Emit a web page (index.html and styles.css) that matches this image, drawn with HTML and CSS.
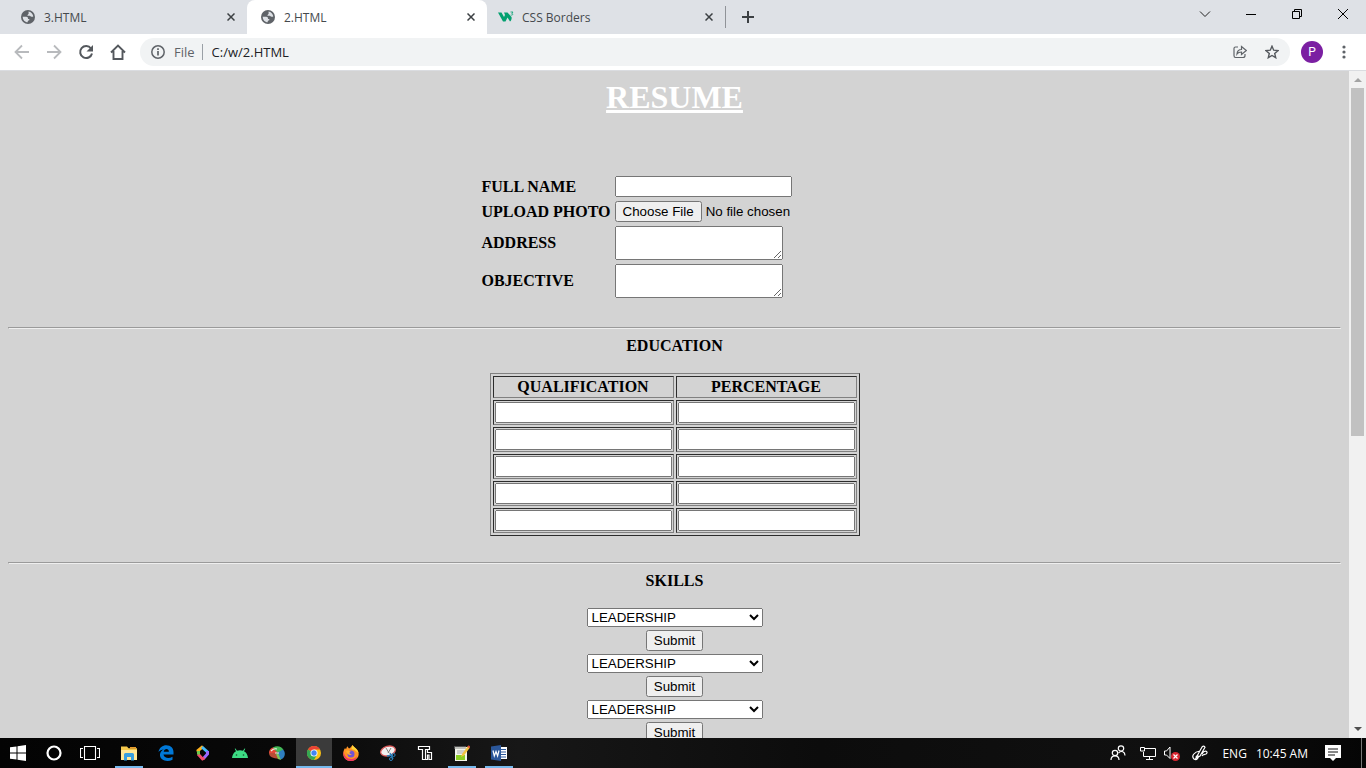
FILE: index.html
```html
<!DOCTYPE html>
<html lang="en">
<head>
<meta charset="utf-8">
<title>2.HTML</title>
<link rel="stylesheet" href="styles.css">
</head>
<body>
<svg class="defs" aria-hidden="true">
  <symbol id="globe" viewBox="0 0 14 14"><circle cx="7" cy="7" r="7" fill="#5f6368"/><path d="M7.5 1.6C10 2 12 4 12.3 6.500c-1.500.7-2.500 0-3.300-.8H6.500C6 5 7.600 4.500 7.700 3.600zM1.700 6.800h3.600c1.200 0 1.800.9 1.700 2.100h1.300v1.400c-1.500.3-1.600.9-1.600 2C3.800 12.300 1.700 9.800 1.700 6.800z" fill="#dee1e6"/></symbol>
  <symbol id="close" viewBox="0 0 8 8"><path d="M.5.5l7 7M7.500.5l-7 7" stroke="#3c4043" stroke-width="1.500" fill="none"/></symbol>
</svg>
<div class="desktop">
  <header class="tabs">
    <div class="tab"><svg class="i14"><use href="#globe"/></svg><span class="tab-title">3.HTML</span><button class="plain" aria-label="Close 3.HTML"><svg class="i8"><use href="#close"/></svg></button></div>
    <div class="tab active"><svg class="i14"><use href="#globe"/></svg><span class="tab-title">2.HTML</span><button class="plain" aria-label="Close 2.HTML"><svg class="i8"><use href="#close"/></svg></button></div>
    <div class="tab last"><svg class="w3" viewBox="0 0 16 12"><path d="M0 1.500h3.500L6 6l1-2-1-2.500h3.500l4 4.500c.5 1.500-.2 4-1.500 4.500L9.500 6.500 7.500 10.500H5z" fill="#04a070"/><path d="M12.500 1h2.500l-1.200 1.500c1.700.2 1.200 2-1.100 1.500" fill="none" stroke="#04a070" stroke-width=".8"/></svg><span class="tab-title">CSS Borders</span><button class="plain" aria-label="Close CSS Borders"><svg class="i8"><use href="#close"/></svg></button></div>
    <button class="plain new-tab" aria-label="New tab"><svg class="i12" viewBox="0 0 12 12"><path d="M6 0v12M0 6h12" stroke="#3c4043" stroke-width="2"/></svg></button>
    <div class="window-controls">
      <button class="plain" aria-label="Search tabs"><svg class="i12" viewBox="0 0 12 12"><path d="M1 3.500l5 5 5-5" fill="none" stroke="#222"/></svg></button>
      <button class="plain" aria-label="Minimize"><svg class="i12" viewBox="0 0 12 12"><path d="M1 6.500h10" stroke="#000"/></svg></button>
      <button class="plain" aria-label="Restore"><svg class="i12" viewBox="0 0 12 12"><path d="M1.500 3.500h7v7h-7zM3.500 3.500v-2h7v7h-2" fill="none" stroke="#000"/></svg></button>
      <button class="plain" aria-label="Close window"><svg class="i12" viewBox="0 0 12 12"><path d="M1 1l10 10M11 1L1 11" stroke="#000"/></svg></button>
    </div>
  </header>
  <nav class="toolbar">
    <button class="plain" aria-label="Back"><svg class="i16" viewBox="0 0 16 16"><path d="M15 8H2M8 1.500L1.500 8 8 14.500" fill="none" stroke="#b8babd" stroke-width="1.800"/></svg></button>
    <button class="plain" aria-label="Forward"><svg class="i16" viewBox="0 0 16 16"><path d="M1 8h13M8 1.500L14.500 8 8 14.500" fill="none" stroke="#b8babd" stroke-width="1.800"/></svg></button>
    <button class="plain" aria-label="Reload"><svg class="i16" viewBox="0 0 16 16"><path d="M13 4.500A6 6 0 1 0 14 9.500" fill="none" stroke="#54585d" stroke-width="2"/><path d="M15 1v6.500H8.500z" fill="#54585d"/></svg></button>
    <button class="plain" aria-label="Home"><svg class="i16" viewBox="0 0 16 16"><path d="M1 8.500L8 1.500l7 7M3.500 7v8h9V7" fill="none" stroke="#54585d" stroke-width="1.900"/></svg></button>
    <div class="address">
      <svg class="i14" viewBox="0 0 14 14"><circle cx="7" cy="7" r="6.200" fill="none" stroke="#5f6368" stroke-width="1.500"/><path d="M7 6v4.500M7 3.300V5" stroke="#5f6368" stroke-width="1.700"/></svg>
      <span class="scheme">File</span>
      <input class="url" aria-label="Address" value="C:/w/2.HTML">
      <button class="plain" aria-label="Share"><svg class="i14" viewBox="0 0 14 14"><path d="M5 2H2.500Q1 2 1 3.500v7Q1 12.500 2.500 12.500h7.500q2 0 2-2V9M4 9c.2-3 1.700-4.500 4.500-4.500V1.500l4.800 4-4.800 4V7C6.500 7 5 7.500 4 9z" fill="none" stroke="#5f6368" stroke-width="1.200"/></svg></button>
      <button class="plain" aria-label="Bookmark"><svg class="i14" viewBox="0 0 14 14"><path d="M7 1.200l1.700 4 4.300.4-3.300 2.900 1 4.200L7 10.500l-3.700 2.200 1-4.200L1 5.600l4.300-.4z" fill="none" stroke="#54585d" stroke-width="1.400"/></svg></button>
    </div>
    <button class="avatar" aria-label="Profile P">P</button>
    <button class="plain menu" aria-label="Menu"><svg class="i16" viewBox="0 0 16 16"><g fill="#5f6368"><circle cx="8" cy="3" r="1.600"/><circle cx="8" cy="8" r="1.600"/><circle cx="8" cy="13" r="1.600"/></g></svg></button>
  </nav>
  <div class="viewport">
    <main class="page">
      <h1>RESUME</h1>
      <table class="details">
        <tr><th><label for="name">FULL NAME</label></th><td><input id="name" class="field" type="text"></td></tr>
        <tr><th><label for="photo">UPLOAD PHOTO</label></th><td><input id="photo" class="file" type="file"></td></tr>
        <tr><th><label for="addr">ADDRESS</label></th><td><textarea id="addr"></textarea></td></tr>
        <tr><th><label for="obj">OBJECTIVE</label></th><td><textarea id="obj"></textarea></td></tr>
      </table>
      <hr>
      <h2>EDUCATION</h2>
      <table class="education">
        <tr><th>QUALIFICATION</th><th>PERCENTAGE</th></tr>
        <tr><td><input class="field" aria-label="Qualification 1"></td><td><input class="field" aria-label="Percentage 1"></td></tr>
        <tr><td><input class="field" aria-label="Qualification 2"></td><td><input class="field" aria-label="Percentage 2"></td></tr>
        <tr><td><input class="field" aria-label="Qualification 3"></td><td><input class="field" aria-label="Percentage 3"></td></tr>
        <tr><td><input class="field" aria-label="Qualification 4"></td><td><input class="field" aria-label="Percentage 4"></td></tr>
        <tr><td><input class="field" aria-label="Qualification 5"></td><td><input class="field" aria-label="Percentage 5"></td></tr>
      </table>
      <hr>
      <h2>SKILLS</h2>
      <form class="skills">
        <select aria-label="Skill 1"><option>LEADERSHIP</option></select>
        <button type="button">Submit</button>
        <select aria-label="Skill 2"><option>LEADERSHIP</option></select>
        <button type="button">Submit</button>
        <select aria-label="Skill 3"><option>LEADERSHIP</option></select>
        <button type="button">Submit</button>
      </form>
    </main>
    <div class="scrollbar" aria-hidden="true">
      <svg class="arrow" viewBox="0 0 17 17"><path d="M5 11l4-4 4 4z" fill="#a3a3a3"/></svg>
      <div class="track"><div class="thumb"></div></div>
      <svg class="arrow" viewBox="0 0 17 17"><path d="M5 6l4 4 4-4z" fill="#505050"/></svg>
    </div>
  </div>
  <footer class="taskbar">
    <div class="system">
      <button class="task" aria-label="Start"><svg class="i16" viewBox="0 0 16 16"><path d="M0 2.300l6.500-.9v6.100H0zM7.500 1.200L16 0v7.500H7.500zM0 8.500h6.500v6.100L0 13.700zM7.500 8.500H16V16l-8.500-1.200z" fill="#fff"/></svg></button>
      <button class="task" aria-label="Cortana"><svg class="i16" viewBox="0 0 16 16"><circle cx="8" cy="8" r="6.500" fill="none" stroke="#fff" stroke-width="2.200"/></svg></button>
      <button class="task" aria-label="Task view"><svg class="i20" viewBox="0 0 20 20"><path d="M4.500 3.500h11v13h-11zM3 5.500H.5v9H3M17 5.500h2.500v9H17" fill="none" stroke="#fff" stroke-width="1.100"/></svg></button>
    </div>
    <button class="task open" aria-label="File Explorer"><svg class="i16" viewBox="0 0 16 16"><path d="M0 1.500h6l1.500 1.800H16V15H0z" fill="#f5c84c"/><path d="M0 5h16v10H0z" fill="#ffe797"/><path d="M9 2h6v1.500H9z" fill="#e99b28"/><path d="M3 15.500V9.500Q3 8 4.500 8h7Q13 8 13 9.500v6h-3V12H6v3.500z" fill="#379fe0"/></svg></button>
    <button class="task" aria-label="Edge"><svg class="i16" viewBox="0 0 16 16"><path d="M.5 7C1.500 2.500 4.500.3 8.300.3c4.700 0 7.200 3 7.200 7V9.500H5.500c.3 3.500 5.500 4.400 9 2.200v3.100C8.500 17.700 1.500 15 2 9.500 2.200 7 3.600 5.500 5.800 4.500 3.500 4.700 1.700 5.600.5 7zM5.700 6.700h5.200c0-4-4.800-3.500-5.200 0z" fill="#0078d7"/></svg></button>
    <button class="task" aria-label="Diamond app"><svg class="i16" viewBox="0 0 16 16"><g fill="none" stroke-width="3"><path d="M3.500 7.500l-.5-2L8 1.500" stroke="#ffb21c"/><path d="M7 2l5.500 5" stroke="#43bafa"/><path d="M12.500 6v3l-4 4.500" stroke="#9a68ff"/><path d="M9.500 13L7.500 14 3 9" stroke="#f34c6b"/><path d="M3.500 6v3.500" stroke="#6cca4f"/></g></svg></button>
    <button class="task" aria-label="Android"><svg class="i16" viewBox="0 0 16 16"><path d="M0 13C.3 9.500 2 7.200 4 6.200L2.700 3.800l.8-.4L5 5.800c1.900-.8 4.100-.8 6 0l1.500-2.400.8.4L12 6.200c2.200 1.200 3.700 3.500 4 6.800z" fill="#3ddc84"/><g fill="#174d2e"><circle cx="4.500" cy="10" r=".8"/><circle cx="11.500" cy="10" r=".8"/></g></svg></button>
    <button class="task" aria-label="Color tool"><svg class="i16" viewBox="0 0 16 16"><path d="M0 8C0 4 3 2 7 2l2 5-3 3z" fill="#e34837"/><path d="M4 2.500C8 0 13 1.500 14.500 5L9 8 6 5z" fill="#43b957"/><path d="M14 4.500c3.500 3.500 1.500 9.500-2.500 10L8 8z" fill="#2f7fc0"/><path d="M0 8l7 0 3 6C4 13 0 12 0 8z" fill="#b84d37"/><path d="M9 8l3 7-3-1-2-5z" fill="#7ec85c"/><path d="M2 6q3-3 6-2M6 8h4" stroke="#eef3ea" stroke-width="1.200" fill="none"/></svg></button>
    <button class="task open current" aria-label="Chrome"><svg class="i14" viewBox="0 0 14 14"><circle cx="7" cy="7" r="7" fill="#fbc116"/><path d="M7 7L.9 3.500A7 7 0 0 1 13.100 3.500H7z" fill="#ea4335"/><path d="M.9 3.500A7 7 0 0 0 7 14l3-5.200L7 7z" fill="#34a853"/><circle cx="7" cy="7" r="3.500" fill="#fff"/><circle cx="7" cy="7" r="2.700" fill="#4285f4"/></svg></button>
    <button class="task" aria-label="Firefox"><svg class="i16" viewBox="0 0 16 16"><path d="M9.500 0c1 2 3 3 4.500 4.500 4 5 .5 11.500-6 11.500C1 16-2 9.500 2 3l1 1.200 1.200-3L6 3.500c1.500-.5 2-1.500 3.500-3.500z" fill="#ff9424"/><path d="M.7 6C1 15 11 16 14 11c-1 4-3 5-6 5C2 16-.5 11 .7 6z" fill="#f23863"/><path d="M9.500 0c1 2 5 3.500 6 8l-4-3-3-1z" fill="#ffd637"/><circle cx="8" cy="9" r="3.500" fill="#7453d6"/><path d="M3 6c2-1 4 0 5 1-3 0-1 3 1 2-1 2-5 1-6-3z" fill="#ffb02e"/></svg></button>
    <button class="task" aria-label="Snipping Tool"><svg class="i16" viewBox="0 0 16 16"><ellipse cx="8" cy="6" rx="7.500" ry="4.700" fill="#f2f1f1" stroke="#d95a5a" stroke-width="1.300" transform="rotate(-16 8 6)"/><path d="M6 3l3 5M11 3L8 8" stroke="#85817e"/><path d="M7 11l6-1M10 8l3 6" stroke="#2a81bd" stroke-width="1.400"/><circle cx="13.500" cy="10" r="1.600" fill="none" stroke="#2a81bd"/><circle cx="11" cy="14" r="1.500" fill="none" stroke="#2a81bd"/></svg></button>
    <button class="task" aria-label="Typing app"><svg class="i16" viewBox="0 0 16 16"><path d="M1.500 1.500h11v3h-4v10h-3v-10h-4zM8.500 4.500h2v3h4v7h-2.500v-4.500h-1.500v4.500h-2z" fill="#111" stroke="#fff" stroke-width="1.200"/></svg></button>
    <button class="task open" aria-label="Notepad"><svg class="i16" viewBox="0 0 16 16"><path d="M1 2h12v14H1z" fill="#f3f5ec"/><path d="M1 1v3M3 1v3M5 1v3M7 1v3M9 1v3M11 1v3" stroke="#8b8b8b"/><path d="M3 6h8M3 8h7" stroke="#aaa"/><path d="M2 10h9v5H2z" fill="#8ccf24"/><path d="M7 12l1-3 6-8 2 1.500-6 8z" fill="#f1c341"/><path d="M14 1l2 1.500" stroke="#d84b38" stroke-width="2"/></svg></button>
    <button class="task open" aria-label="Word"><svg class="i16" viewBox="0 0 16 16"><path d="M8 2h8v12H8z" fill="#fff"/><path d="M10 4.500h5M10 7h5M10 9.500h5M10 12h5" stroke="#2b579a"/><path d="M0 1.500L10 0v16L0 14.500z" fill="#2b579a"/><path d="M2 5.500L3.300 11 5 6.500 6.600 11 8 5.500" fill="none" stroke="#fff" stroke-width="1.200"/></svg></button>
    <div class="tray">
      <svg class="i16" viewBox="0 0 16 16"><g fill="none" stroke="#fff" stroke-width="1.200"><circle cx="11" cy="3.500" r="2.700"/><circle cx="5" cy="8" r="2.700"/><path d="M1 15c0-5.500 8-5.500 8 0M8.500 8c3-3 6.500-1 6.500 2.500"/></g></svg>
      <svg class="i16 screen" viewBox="0 0 16 16"><path d="M5 3.500h10.500v8H3.500V7M9.500 11.500v3M6 14.500h7M.5 2.500h4V6h-4z" fill="none" stroke="#fff"/></svg>
      <svg class="i16 sound" viewBox="0 0 16 16"><path d="M.5 6h2L6 2v11.500L2.500 10h-2z" fill="none" stroke="#fff"/><circle cx="11.500" cy="11.500" r="4.500" fill="#da2630"/><path d="M9.500 9.500l4 4M13.500 9.500l-4 4" stroke="#fff" stroke-width="1.200"/></svg>
      <svg class="i16 pen" viewBox="0 0 16 16"><path d="M4 13L10 2q2-2 3 .3L8 11zM10 9c3-5 7-2 4 0-2 1-3 0-4 2M8 6C2 7-1 11 2 14c3 2 5-2 4-3-1-.8-3 1-1 2" fill="none" stroke="#fff" stroke-width="1.200"/></svg>
      <span class="lang">ENG</span><span class="clock">10:45 AM</span>
      <svg class="i16" viewBox="0 0 16 16"><path d="M0 0h16v13h-5l-3 3-3-3H0z" fill="#fff"/><path d="M3 4h10M3 7h10M3 10h7" stroke="#111"/></svg>
    </div>
  </footer>
</div>
</body>
</html>
```
FILE: styles.css
```css
* { box-sizing: border-box; }
html, body { height: 100%; }
body { margin: 0; font-family: "Liberation Serif", serif; overflow: hidden; }
.defs { display: none; }
svg { display: block; flex: none; }
.i8 { width: 8px; height: 8px; }
.i12 { width: 12px; height: 12px; }
.i14 { width: 14px; height: 14px; }
.i16 { width: 16px; height: 16px; }
.i20 { width: 20px; height: 20px; }
.desktop { display: flex; flex-direction: column; height: 100vh; }
.plain { display: flex; align-items: center; justify-content: center; padding: 0; border: 0; background: none; }

.tabs { display: flex; flex: none; height: 34px; padding-left: 7px; background: #dee1e6; font-family: "Open Sans", sans-serif; font-size: 12px; color: #45494d; }
.tab { display: flex; align-items: center; flex: 0 1 240px; gap: 9px; padding: 0 12px 0 14px; }
.tab.active { background: #fff; border-radius: 8px 8px 0 0; }
.tab.last { flex-basis: 239px; padding-left: 11px; gap: 8px; border-right: 1px solid #909398; border-image: linear-gradient(transparent 7px, #909398 7px 27px, transparent 27px) 1; }
.tab-title { flex: 1; }
.w3 { width: 16px; height: 12px; }
.new-tab { width: 44px; }
.window-controls { display: flex; margin-left: auto; height: 28px; }
.window-controls button { width: 46px; }

.toolbar { display: flex; flex: none; align-items: center; height: 37px; padding: 0 10px 0 6px; border-bottom: 1px solid #dadce0; background: #fff; font-family: "Open Sans", sans-serif; }
.toolbar > .plain { width: 32px; height: 32px; }
.address { display: flex; flex: 1; align-items: center; height: 28px; margin-left: 6px; padding: 0 11px; border-radius: 14px; background: #f1f3f4; font-size: 13px; color: #5f6368; }
.scheme { margin-left: 9px; padding-right: 7px; border-right: 1px solid #9aa0a6; line-height: 16px; }
.url { flex: 1; min-width: 0; padding: 0 0 0 9px; border: 0; background: none; font: inherit; color: #202124; }
.address .plain { width: 14px; margin-left: 18px; }
.avatar { width: 22px; height: 22px; margin-left: 11px; padding: 0; border: 0; border-radius: 50%; background: #7b1fa2; color: #fff; font: 12px Roboto, sans-serif; }
.toolbar > .menu { width: 24px; margin-left: 9px; margin-right: 0; }

.viewport { display: flex; flex: 1; min-height: 0; background: #d3d3d3; }
.page { flex: 1; min-width: 0; padding: 8px; overflow: hidden; }
.page h1 { margin: 0 0 57px; font-size: 32px; line-height: 37px; text-align: center; text-decoration: underline; color: #fff; }
.page h2 { margin: 0 0 18px; font-size: 16px; line-height: 18px; text-align: center; }
.page hr { margin: 26px 0 8px; }
.page input, .page select, .page button, .page textarea { font-family: "Liberation Sans", sans-serif; }
.details { margin: 0 auto; border-spacing: 2px; }
.details th { padding: 1px; text-align: left; }
.details td { padding: 1px; }
.field { display: block; width: 177px; height: 21px; margin: 0; }
.file { display: block; width: 253px; height: 21px; }
textarea { display: block; width: 168px; height: 34px; }
.education { margin: 0 auto; border: 1px solid; border-color: #808080 #2c2c2c #2c2c2c #808080; border-spacing: 2px; }
.education th, .education td { padding: 1px; border: 1px solid; border-color: #2c2c2c #808080 #808080 #2c2c2c; }
.education th { line-height: 18px; }
.skills { display: flex; flex-direction: column; align-items: center; gap: 3px; }
.skills select { width: 176px; height: 19px; }
.skills button { width: 57px; height: 21px; padding: 0; }

.scrollbar { display: flex; flex-direction: column; flex: none; width: 17px; background: #f1f1f1; }
.arrow { width: 17px; height: 17px; }
.track { flex: 1; padding: 0 2px; }
.thumb { height: 55%; background: #c1c1c1; }

.taskbar { display: flex; flex: none; gap: 1px; height: 30px; background: linear-gradient(90deg, #030303, #080808 20%, #171717 38%, #0c0c0c 60%, #101010 85%, #050505); color: #fff; }
.system { display: flex; margin-right: 2px; }
.task { display: flex; align-items: center; justify-content: center; width: 36px; padding: 0; border: 0; background: none; }
.open { background: linear-gradient(#76b9ed, #76b9ed) center bottom / 28px 2px no-repeat; }
.current { background-size: 36px 2px; background-color: #3b3b3b; }
.tray { display: flex; align-items: center; margin-left: auto; padding-right: 20px; border-right: 1px solid #777; margin-right: 4px; font-family: "Open Sans", sans-serif; font-size: 12px; }
.screen { margin-left: 14px; }
.sound { margin-left: 8px; }
.pen { margin-left: 12px; }
.lang { margin-left: 14px; }
.clock { margin: 0 17px 0 9px; }
```
